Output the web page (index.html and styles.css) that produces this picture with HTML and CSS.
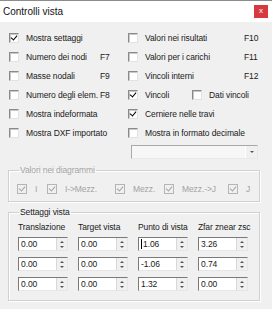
FILE: index.html
```html
<!DOCTYPE html>
<html lang="it">
<head>
    <meta charset="UTF-8">
    <title>Controlli vista</title>
    <link rel="stylesheet" href="styles.css">
</head>
<body>
    <div class="dialog">
        <div class="titlebar">
            <span class="title">Controlli vista</span>
            <span class="close">x</span>
        </div>

        <div class="options">
            <div class="opt left"><span class="box checked"></span><span class="lbl">Mostra settaggi</span></div>
            <div class="opt right"><span class="box"></span><span class="lbl">Valori nei risultati</span><span class="key">F10</span></div>

            <div class="opt left"><span class="box"></span><span class="lbl">Numero dei nodi</span><span class="key">F7</span></div>
            <div class="opt right"><span class="box"></span><span class="lbl">Valori per i carichi</span><span class="key">F11</span></div>

            <div class="opt left"><span class="box"></span><span class="lbl">Masse nodali</span><span class="key">F9</span></div>
            <div class="opt right"><span class="box"></span><span class="lbl">Vincoli interni</span><span class="key">F12</span></div>

            <div class="opt left"><span class="box"></span><span class="lbl">Numero degli elem.</span><span class="key">F8</span></div>
            <div class="opt right">
                <span class="box checked"></span><span class="lbl short">Vincoli</span>
                <span class="box"></span><span class="lbl">Dati vincoli</span>
            </div>

            <div class="opt left"><span class="box"></span><span class="lbl">Mostra indeformata</span></div>
            <div class="opt right"><span class="box checked"></span><span class="lbl">Cerniere nelle travi</span></div>

            <div class="opt left"><span class="box"></span><span class="lbl wide">Mostra DXF importato</span></div>
            <div class="opt right"><span class="box"></span><span class="lbl wide">Mostra in formato decimale</span></div>

            <div></div>
            <div class="combo"><span class="combo-btn"><i class="arrow-down"></i></span></div>
        </div>

        <fieldset class="group disabled">
            <legend>Valori nei diagrammi</legend>
            <div class="diag">
                <div class="opt"><span class="box checked"></span><span>I</span></div>
                <div class="opt"><span class="box checked"></span><span>I-&gt;Mezz.</span></div>
                <div class="opt"><span class="box checked"></span><span>Mezz.</span></div>
                <div class="opt"><span class="box checked"></span><span>Mezz.-&gt;J</span></div>
                <div class="opt"><span class="box checked"></span><span>J</span></div>
            </div>
        </fieldset>

        <fieldset class="group">
            <legend>Settaggi vista</legend>
            <div class="grid">
                <span class="head">Translazione</span>
                <span class="head">Target vista</span>
                <span class="head">Punto di vista</span>
                <span class="head">Zfar znear zsc</span>

                <div class="spin"><span class="val">0.00</span><span class="spin-btn"><i class="arrow-up"></i><i class="arrow-down"></i></span></div>
                <div class="spin"><span class="val">0.00</span><span class="spin-btn"><i class="arrow-up"></i><i class="arrow-down"></i></span></div>
                <div class="spin"><span class="val"><b class="caret"></b>1.06</span><span class="spin-btn"><i class="arrow-up"></i><i class="arrow-down"></i></span></div>
                <div class="spin"><span class="val">3.26</span><span class="spin-btn"><i class="arrow-up"></i><i class="arrow-down"></i></span></div>

                <div class="spin"><span class="val">0.00</span><span class="spin-btn"><i class="arrow-up"></i><i class="arrow-down"></i></span></div>
                <div class="spin"><span class="val">0.00</span><span class="spin-btn"><i class="arrow-up"></i><i class="arrow-down"></i></span></div>
                <div class="spin"><span class="val">-1.06</span><span class="spin-btn"><i class="arrow-up"></i><i class="arrow-down"></i></span></div>
                <div class="spin"><span class="val">0.74</span><span class="spin-btn"><i class="arrow-up"></i><i class="arrow-down"></i></span></div>

                <div class="spin"><span class="val">0.00</span><span class="spin-btn"><i class="arrow-up"></i><i class="arrow-down"></i></span></div>
                <div class="spin"><span class="val">0.00</span><span class="spin-btn"><i class="arrow-up"></i><i class="arrow-down"></i></span></div>
                <div class="spin"><span class="val">1.32</span><span class="spin-btn"><i class="arrow-up"></i><i class="arrow-down"></i></span></div>
                <div class="spin"><span class="val">0.00</span><span class="spin-btn"><i class="arrow-up"></i><i class="arrow-down"></i></span></div>
            </div>
        </fieldset>
    </div>
</body>
</html>
```
FILE: styles.css
```css
body {
    margin: 0;
    background: #fff;
    font-family: 'Liberation Sans', Arial, sans-serif;
    font-size: 8.5px;
    line-height: 10px;
    letter-spacing: -0.1px;
    color: #1a1a1a;
}

.dialog {
    width: 272px;
    height: 309px;
    background: #f0f0f0;
    border-top: 1px solid #8c8c8c;
    box-sizing: border-box;
    overflow: hidden;
}

/* title bar */
.titlebar {
    height: 21px;
    background: #fff;
    display: flex;
    align-items: center;
    justify-content: space-between;
    padding: 0 4px 0 3px;
}

.title {
    font-size: 10px;
    letter-spacing: 0;
    color: #111;
}

.close {
    width: 14px;
    height: 13px;
    background: #d63a3f;
    color: #fff;
    font-size: 8px;
    line-height: 11px;
    text-align: center;
}

/* check options */
.options {
    display: grid;
    grid-template-columns: 119px 1fr;
    grid-auto-rows: 19px;
    align-items: center;
    padding: 6px 0 0 9px;
}

.opt {
    display: flex;
    align-items: center;
}

.box {
    flex: none;
    width: 10px;
    height: 10px;
    box-sizing: border-box;
    background: #fff;
    border-top: 1px solid #8a8a8a;
    border-left: 1px solid #8a8a8a;
    border-right: 1px solid #e2e2e2;
    border-bottom: 1px solid #e2e2e2;
    box-shadow: inset 1px 1px 0 #c8c8c8;
    margin-right: 7px;
    position: relative;
}

.box.checked::after {
    content: '';
    position: absolute;
    left: 2px;
    top: 0px;
    width: 3px;
    height: 5px;
    border-right: 1.5px solid #000;
    border-bottom: 1.5px solid #000;
    transform: rotate(40deg);
}

.left .lbl {
    width: 74px;
    white-space: nowrap;
}

.right .lbl {
    width: 99px;
}

.right .lbl.short {
    width: 47px;
}

.lbl.wide {
    width: auto;
    white-space: nowrap;
}

.key {
    white-space: nowrap;
}

/* drop-down */
.combo {
    margin-left: 3px;
    width: 127px;
    height: 14px;
    box-sizing: border-box;
    background: #f7f7f7;
    border: 1px solid #a9a9a9;
    border-right-color: #e8e8e8;
    border-bottom-color: #e8e8e8;
    display: flex;
    justify-content: flex-end;
}

.combo-btn {
    width: 11px;
    height: 100%;
    background: #f0f0f0;
    border-left: 1px solid #fff;
    display: flex;
    align-items: center;
    justify-content: center;
}

.arrow-down,
.arrow-up {
    display: block;
    width: 0;
    height: 0;
    border-left: 2px solid transparent;
    border-right: 2px solid transparent;
}

.arrow-down {
    border-top: 2px solid #555;
}

.arrow-up {
    border-bottom: 2px solid #555;
}

/* group boxes */
.group {
    margin: 4px 12px 0 8px;
    padding: 0;
    border: 1px solid #d0d0d0;
    box-shadow: 1px 1px 0 #fff, inset 1px 1px 0 #fff;
}

.group legend {
    margin-left: 10px;
    padding: 0 1px;
    line-height: 10px;
}

.group + .group {
    margin-top: 5px;
}

.disabled {
    color: #a3a3a3;
}

.diag {
    display: grid;
    grid-template-columns: 30px 68px 49px 64px 1fr;
    align-items: center;
    height: 12px;
    padding: 8px 0 6px 8px;
}

.diag .box {
    background: #f0f0f0;
    border-color: #b5b5b5;
    box-shadow: none;
    margin-right: 8px;
}

.diag .box.checked::after {
    border-color: #a3a3a3;
}

/* view settings */
.grid {
    display: grid;
    grid-template-columns: repeat(4, 50px);
    column-gap: 10px;
    row-gap: 6px;
    padding: 5px 0 9px 9px;
}

.head {
    white-space: nowrap;
    margin-bottom: -1px;
}

.spin {
    height: 14px;
    box-sizing: border-box;
    background: #fff;
    border-top: 1px solid #7a7a7a;
    border-left: 1px solid #7a7a7a;
    border-right: 1px solid #e6e6e6;
    border-bottom: 1px solid #e6e6e6;
    display: flex;
    justify-content: space-between;
}

.val {
    padding-left: 2px;
    line-height: 12px;
    display: flex;
    align-items: center;
}

.caret {
    width: 1px;
    height: 10px;
    background: #000;
    margin-right: 1px;
}

.spin-btn {
    width: 11px;
    background: #f0f0f0;
    border-left: 1px solid #d8d8d8;
    display: flex;
    flex-direction: column;
    align-items: center;
    justify-content: space-around;
    padding: 1px 0;
    box-sizing: border-box;
}
```
